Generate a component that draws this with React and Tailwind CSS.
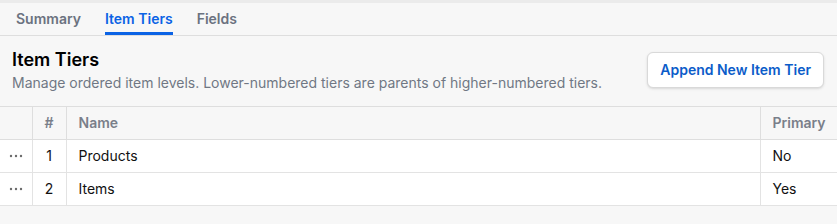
import React from "react";

const tiers = [
  { id: 1, name: "Products", primary: "No" },
  { id: 2, name: "Items", primary: "Yes" },
];

const Dots = () => (
  <svg width="14" height="4" viewBox="0 0 14 4" className="mx-auto block">
    <circle cx="2" cy="2" r="1.2" fill="#6b6b6b" />
    <circle cx="7" cy="2" r="1.2" fill="#6b6b6b" />
    <circle cx="12" cy="2" r="1.2" fill="#6b6b6b" />
  </svg>
);

const App = () => {
  return (
    <div className="min-h-screen bg-[#f7f7f7] text-[#111] font-['Inter',sans-serif]">
      <div className="h-[3px] bg-[#ebebeb]" />
      <div className="flex gap-6 px-4 h-[33px] border-b border-[#dedede]">
        <button className="text-sm font-semibold text-[#6b7280]">Summary</button>
        <button className="relative text-sm font-semibold text-[#0b63e5]">
          Item Tiers
          <span className="absolute left-0 right-0 bottom-0 h-[3px] bg-[#0b63e5]" />
        </button>
        <button className="text-sm font-semibold text-[#6b7280]">Fields</button>
      </div>

      <div className="flex items-start justify-between pl-3 pr-[13px] pt-3 pb-[13px]">
        <div>
          <h2 className="text-lg font-semibold leading-6 text-black">Item Tiers</h2>
          <p className="text-sm text-[#707784] leading-5 mt-[1px]">
            Manage ordered item levels. Lower-numbered tiers are parents of higher-numbered tiers.
          </p>
        </div>
        <button className="mt-1 h-9 px-3 bg-white border border-[#d9d9d9] rounded-md text-sm font-semibold text-[#0b5cc9] shadow-sm">
          Append New Item Tier
        </button>
      </div>

      <table className="w-full border-collapse text-sm">
        <thead>
          <tr className="h-[33px] border-y border-[#dedede]">
            <th className="w-8 border-r border-[#dedede]" />
            <th className="w-[34px] border-r border-[#dedede] font-semibold text-[#7a7f8a] text-center">#</th>
            <th className="border-r border-[#dedede] font-semibold text-[#7a7f8a] text-left pl-3">Name</th>
            <th className="w-[77px] font-semibold text-[#7a7f8a] text-left pl-3">Primary</th>
          </tr>
        </thead>
        <tbody>
          {tiers.map((t) => (
            <tr key={t.id} className="h-[33px] bg-white border-b border-[#e3e3e3]">
              <td className="border-r border-[#e3e3e3]">
                <Dots />
              </td>
              <td className="border-r border-[#e3e3e3] text-center">{t.id}</td>
              <td className="border-r border-[#e3e3e3] pl-3">{t.name}</td>
              <td className="pl-3">{t.primary}</td>
            </tr>
          ))}
        </tbody>
      </table>
    </div>
  );
};

export default App;
